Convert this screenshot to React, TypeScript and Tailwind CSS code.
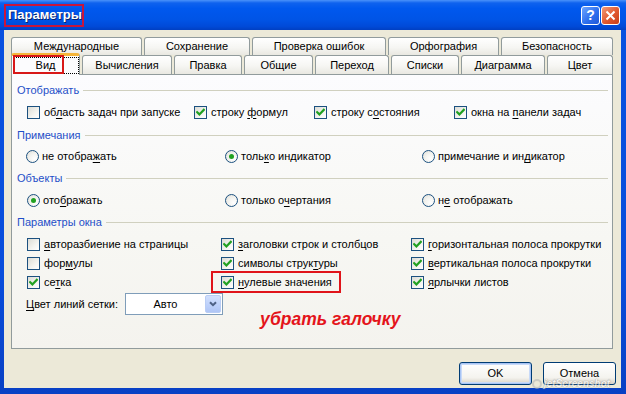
import React from "react";

type LabelProps = { t: string; u?: number };
const Lbl = ({ t, u }: LabelProps) => {
  if (u === undefined || u < 0) return <span className="whitespace-nowrap">{t}</span>;
  return (
    <span className="whitespace-nowrap">
      {t.slice(0, u)}
      <span className="underline underline-offset-[2px]">{t.charAt(u)}</span>
      {t.slice(u + 1)}
    </span>
  );
};

const Check = ({ on }: { on: boolean }) => (
  <span className="w-[13px] h-[13px] shrink-0 border border-[#1C5180] bg-[linear-gradient(135deg,#DCDCD5_0%,#F4F4F0_60%,#FFFFFF_100%)] flex items-center justify-center">
    {on && (
      <svg width="9" height="9" viewBox="0 0 9 9">
        <path d="M1.2 4.2 L3.4 6.4 L7.8 1.8" stroke="#21A121" strokeWidth="2.2" fill="none" strokeLinecap="square" />
      </svg>
    )}
  </span>
);

const Radio = ({ on }: { on: boolean }) => (
  <span className="w-[13px] h-[13px] shrink-0 rounded-full border border-[#1C5180] bg-[radial-gradient(circle_at_70%_70%,#FFFFFF_0%,#F2F2EE_50%,#DCDCD5_100%)] flex items-center justify-center">
    {on && <span className="w-[5px] h-[5px] rounded-full bg-[#21A121]" />}
  </span>
);

const CB = ({ t, u, on, w }: { t: string; u?: number; on: boolean; w?: string }) => (
  <div className={`flex items-center gap-[4px] ${w ?? ""}`}>
    <Check on={on} />
    <Lbl t={t} u={u} />
  </div>
);

const RB = ({ t, u, on, w }: { t: string; u?: number; on: boolean; w?: string }) => (
  <div className={`flex items-center gap-[3px] ${w ?? ""}`}>
    <Radio on={on} />
    <Lbl t={t} u={u} />
  </div>
);

const Header = ({ t, h }: { t: string; h: string }) => (
  <div className={`flex items-center ${h}`}>
    <span className="text-[#1F4FC8] whitespace-nowrap">{t}</span>
    <span className="flex-1 h-px bg-[#D0D0BF] ml-[4px]" />
  </div>
);

const BackTab = ({ t, w }: { t: string; w: string }) => (
  <div
    className={`${w} h-full rounded-t-[3px] border border-b-0 border-[#919B9C] bg-[linear-gradient(to_bottom,#FFFFFF_0%,#F6F6F3_55%,#E9E8E1_100%)] flex items-center justify-center`}
  >
    {t}
  </div>
);

export default function App() {
  return (
    <div className="w-[626px] h-[394px] relative overflow-hidden flex flex-col bg-[linear-gradient(to_bottom,#0A52E0_0%,#0A4EDB_70%,#0840C4_100%)] font-['Liberation_Sans',Arial,sans-serif] text-[11px] text-black">
      {/* Title bar */}
      <div className="h-[30px] shrink-0 flex items-center pl-[8px] pr-[6px] bg-[linear-gradient(to_bottom,#4A92FA_0%,#0F62EE_10%,#0058EE_28%,#0054E6_65%,#004AD8_88%,#003FC2_100%)]">
        <span className="text-white font-bold text-[13px] [text-shadow:1px_1px_0_#0A246A]">Параметры</span>
        <div className="ml-auto flex gap-[1px]">
          <div className="w-[19px] h-[19px] rounded-[3px] border border-white bg-[linear-gradient(135deg,#6FA6FF_0%,#2F70EE_55%,#1F57D8_100%)] flex items-center justify-center text-white font-bold text-[14px] leading-none">
            ?
          </div>
          <div className="w-[19px] h-[19px] rounded-[3px] border border-white bg-[linear-gradient(135deg,#F09A7A_0%,#E0582F_55%,#C83E18_100%)] flex items-center justify-center">
            <svg width="11" height="11" viewBox="0 0 11 11">
              <path d="M1.5 1.5 L9.5 9.5 M9.5 1.5 L1.5 9.5" stroke="white" strokeWidth="2" />
            </svg>
          </div>
        </div>
      </div>

      {/* Body */}
      <div className="flex-1 ml-[4px] mr-[5px] mb-[6px] bg-[#ECE9D8] flex flex-col pt-[7px] pl-[7px]">
        {/* Tab row 1 */}
        <div className="h-[18px] flex gap-[2px]">
          <BackTab t="Международные" w="w-[131px]" />
          <BackTab t="Сохранение" w="w-[106px]" />
          <BackTab t="Проверка ошибок" w="w-[134px]" />
          <BackTab t="Орфография" w="w-[111px]" />
          <BackTab t="Безопасность" w="w-[112px]" />
        </div>
        {/* Tab row 2 */}
        <div className="h-[19px] flex items-end gap-[2px]">
          <div className="w-[69px] h-[22px] mb-[-1px] relative z-10 rounded-t-[3px] border-x border-[#919B9C] border-t-[3px] border-t-[#F5B53A] bg-[#FCFCFE] flex items-center justify-center">
            <div className="absolute left-[2px] right-[0px] top-[1px] bottom-[1px] border border-dotted border-black" />
            <span className="relative">Вид</span>
          </div>
          <BackTab t="Вычисления" w="w-[90px]" />
          <BackTab t="Правка" w="w-[68px]" />
          <BackTab t="Общие" w="w-[69px]" />
          <BackTab t="Переход" w="w-[74px]" />
          <BackTab t="Списки" w="w-[68px]" />
          <BackTab t="Диаграмма" w="w-[84px]" />
          <BackTab t="Цвет" w="w-[66px]" />
        </div>

        {/* Panel */}
        <div className="w-[602px] h-[275px] border border-[#919B9C] bg-[linear-gradient(to_bottom,#FCFCFE_0%,#F7F7F3_60%,#F4F3EE_100%)] flex flex-col pt-[5px] pl-[5px] pr-[4px]">
          <Header t="Отображать" h="h-[20px]" />
          <div className="h-[24px] flex items-center pl-[10px]">
            <CB t="область задач при запуске" u={2} on={false} w="w-[167px]" />
            <CB t="строку формул" u={7} on={true} w="w-[120px]" />
            <CB t="строку состояния" u={8} on={true} w="w-[140px]" />
            <CB t="окна на панели задач" u={8} on={true} />
          </div>
          <Header t="Примечания" h="h-[22px]" />
          <div className="h-[21px] flex items-center pl-[9px]">
            <RB t="не отображать" u={9} on={false} w="w-[199px]" />
            <RB t="только индикатор" u={4} on={true} w="w-[197px]" />
            <RB t="примечание и индикатор" u={15} on={false} />
          </div>
          <Header t="Объекты" h="h-[23px]" />
          <div className="h-[21px] flex items-center pl-[10px]">
            <RB t="отображать" u={3} on={true} w="w-[198px]" />
            <RB t="только очертания" u={8} on={false} w="w-[197px]" />
            <RB t="не отображать" u={1} on={false} />
          </div>
          <Header t="Параметры окна" h="h-[23px]" />
          <div className="flex flex-col pl-[10px]">
            <div className="h-[20px] flex items-center">
              <CB t="авторазбиение на страницы" u={0} on={false} w="w-[194px]" />
              <CB t="заголовки строк и столбцов" u={0} on={true} w="w-[190px]" />
              <CB t="горизонтальная полоса прокрутки" u={0} on={true} />
            </div>
            <div className="h-[19px] flex items-center">
              <CB t="формулы" u={3} on={false} w="w-[194px]" />
              <CB t="символы структуры" u={13} on={true} w="w-[190px]" />
              <CB t="вертикальная полоса прокрутки" u={0} on={true} />
            </div>
            <div className="h-[19px] flex items-center">
              <CB t="сетка" u={2} on={true} w="w-[194px]" />
              <CB t="нулевые значения" u={0} on={true} w="w-[190px]" />
              <CB t="ярлычки листов" u={0} on={true} />
            </div>
          </div>
          <div className="h-[24px] flex items-center pl-[9px]">
            <span className="w-[99px]">
              <Lbl t="Цвет линий сетки:" u={0} />
            </span>
            <div className="w-[98px] h-[22px] border border-[#7F9DB9] bg-white flex items-center">
              <span className="flex-1 text-center">Авто</span>
              <div className="w-[16px] h-[18px] mr-[1px] rounded-[2px] border border-[#B9CDF5] bg-[linear-gradient(to_bottom,#D2E0FD_0%,#BCD0FA_60%,#AFC5F5_100%)] flex items-center justify-center">
                <svg width="8" height="6" viewBox="0 0 8 6">
                  <path d="M1 1.2 L4 4.2 L7 1.2" stroke="#4D6185" strokeWidth="2" fill="none" />
                </svg>
              </div>
            </div>
          </div>
        </div>

        {/* Buttons */}
        <div className="mt-[13px] flex justify-end gap-[11px] pr-[5px]">
          <button className="w-[73px] h-[23px] rounded-[3px] border border-[#003C74] bg-[linear-gradient(to_bottom,#FFFFFF_0%,#F4F3EE_70%,#D6D0C5_100%)] shadow-[inset_0_0_0_1px_#A8C4F4,inset_0_0_0_2px_#C8DAF8]">
            OK
          </button>
          <button className="w-[73px] h-[23px] rounded-[3px] border border-[#003C74] bg-[linear-gradient(to_bottom,#FFFFFF_0%,#F4F3EE_70%,#D6D0C5_100%)]">
            Отмена
          </button>
        </div>
      </div>

      {/* Annotation overlays */}
      <div className="absolute left-[4px] top-[4px] w-[80px] h-[23px] border-2 border-[#C8163C]" />
      <div className="absolute left-[13px] top-[55px] w-[51px] h-[19px] border-2 border-[#D81818] z-20" />
      <div className="absolute left-[211px] top-[271px] w-[130px] h-[22px] border-2 border-[#E0141A]" />
      <div className="absolute left-[260px] top-[306px] text-[17.5px] font-bold italic text-[#E4141B] leading-normal">
        убрать галочку
      </div>

      {/* Watermark */}
      <div className="absolute left-[532px] top-[379px] flex items-center gap-[2px] opacity-60">
        <span className="w-[10px] h-[10px] rounded-full border-2 border-[#B8B8B8]" />
        <span className="italic font-bold text-[10px] leading-none text-white [text-shadow:0_0_1px_#7A7A7A,0_0_1px_#7A7A7A]">jetScreenshot</span>
      </div>
    </div>
  );
}
